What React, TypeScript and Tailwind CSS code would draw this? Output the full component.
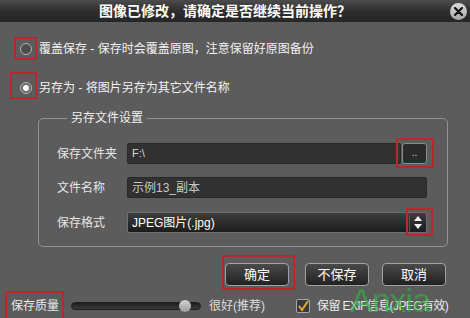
import React from 'react';

const red = 'pointer-events-none absolute border-2 border-[#b8282c]';

function Radio({ checked }: { checked?: boolean }) {
  return (
    <span
      className={
        'flex h-[12px] w-[12px] items-center justify-center rounded-full border border-[#b4b4b4] ' +
        (checked ? 'bg-[#6a6a6a]' : 'bg-[#4e4e4e]')
      }
    >
      {checked && <span className="h-[6px] w-[6px] rounded-full bg-white" />}
    </span>
  );
}

function DarkButton({ label }: { label: string }) {
  return (
    <button className="flex h-[23px] w-[64px] items-center justify-center rounded-[4px] border border-[#a2a2a2] bg-linear-to-b from-[#4a4a4a] to-[#222222] text-[13px] leading-none text-white">
      {label}
    </button>
  );
}

export default function App() {
  return (
    <div className="relative h-[318px] w-[470px] overflow-hidden bg-[#5c5c5c] font-['Liberation_Sans','Noto_Sans_CJK_SC',sans-serif] text-[12px] leading-none text-[#f2f2f2]">
      {/* title bar */}
      <div className="relative flex h-[22px] items-center justify-center bg-linear-to-b from-[#4c4c4c] via-[#2e2e2e] to-[#262626] pr-[20px]">
        <span className="text-[14px] font-bold text-white">图像已修改，请确定是否继续当前操作？</span>
        <button className="absolute right-[3px] top-[3px] flex h-[17px] w-[17px] items-center justify-center rounded-full bg-linear-to-b from-[#dcdcdc] to-[#a6a6a6]">
          <svg width="9" height="9" viewBox="0 0 9 9">
            <path d="M1 1 L8 8 M8 1 L1 8" stroke="#111" strokeWidth="2.2" strokeLinecap="round" />
          </svg>
        </button>
      </div>

      {/* options */}
      <div className="mt-[15px] flex h-[24px] items-center gap-[7px] pl-[20px]">
        <span className="relative">
          <Radio />
          <span className={red + ' left-[-6px] top-[-6px] h-[23px] w-[23px]'} />
        </span>
        <span>覆盖保存 - 保存时会覆盖原图，注意保留好原图备份</span>
      </div>
      <div className="mt-[15px] flex h-[24px] items-center gap-[7px] pl-[20px]">
        <span className="relative">
          <Radio checked />
          <span className={red + ' left-[-10px] top-[-10px] h-[27px] w-[27px]'} />
        </span>
        <span>另存为 - 将图片另存为其它文件名称</span>
      </div>

      {/* group */}
      <fieldset className="ml-[38px] mt-[12px] w-[410px] rounded-[5px] border border-[#929292] pb-[13px] pl-[18px] pr-[20px] pt-[19px]">
        <legend className="ml-[10px] px-[4px] text-[12px] leading-[12px] text-[#f0f0f0]">另存文件设置</legend>

        <div className="flex h-[21px] items-center">
          <span className="w-[70px] shrink-0 text-[#e6e6e6]">保存文件夹</span>
          <div className="flex h-full flex-1 items-center rounded-[2px] border border-[#282828] bg-[#313131] pl-[4px] text-[11px] text-[#d8d8d8]">
            F:\
          </div>
          <button className="relative ml-[1px] flex h-[21px] w-[25px] items-center justify-center rounded-[3px] border border-[#8c8c8c] bg-[#2a2a2a] pb-[2px] text-[10px] text-[#cfcfcf]">
            ..
            <span className={red + ' left-[-7px] top-[-6px] h-[30px] w-[38px]'} />
          </button>
        </div>

        <div className="mt-[13px] flex h-[21px] items-center">
          <span className="w-[70px] shrink-0 text-[#e6e6e6]">文件名称</span>
          <div className="flex h-full flex-1 items-center rounded-[2px] border border-[#282828] bg-[#313131] pl-[4px] text-[#c8c8c8]">
            示例13_副本
          </div>
        </div>

        <div className="mt-[14px] flex h-[21px] items-center">
          <span className="w-[70px] shrink-0 text-[#e6e6e6]">保存格式</span>
          <div className="flex h-full flex-1 items-center rounded-[2px] border border-[#6e6e6e] bg-linear-to-b from-[#3e3e3e] to-[#1c1c1c] pl-[4px] text-white">
            <span className="flex-1">JPEG图片(.jpg)</span>
            <span className="relative flex h-full w-[17px] items-center justify-center border-l border-[#555]">
              <svg width="10" height="15" viewBox="0 0 10 15">
                <path d="M5 1 L9 6 L1 6 Z" fill="#f4f4f4" />
                <path d="M1 9 L9 9 L5 14 Z" fill="#f4f4f4" />
              </svg>
              <span className={red + ' left-[-4px] top-[-5px] h-[28px] w-[27px]'} />
            </span>
          </div>
        </div>
      </fieldset>

      {/* buttons */}
      <div className="mt-[16px] flex justify-end pr-[24px]">
        <div className="relative">
          <DarkButton label="确定" />
          <span className={red + ' left-[-3px] top-[-8px] h-[35px] w-[73px]'} />
        </div>
        <div className="ml-[16px]">
          <DarkButton label="不保存" />
        </div>
        <div className="ml-[13px]">
          <DarkButton label="取消" />
        </div>
      </div>

      {/* bottom row */}
      <div className="mt-[10px] flex h-[20px] items-center pl-[11px]">
        <span className="relative text-[12px] text-[#e8e8e8]">
          保存质量
          <span className={red + ' left-[-6px] top-[-9px] h-[32px] w-[59px]'} />
        </span>
        <div className="relative ml-[12px] h-[8px] w-[130px] rounded-full border border-[#1e1e1e] bg-linear-to-b from-[#1e1e1e] to-[#3a3a3a]">
          <span className="absolute left-[107px] top-[-3px] h-[12px] w-[12px] rounded-full bg-linear-to-b from-[#d4d4d4] to-[#9a9a9a]" />
        </div>
        <span className="ml-[8px] w-[87px] text-[12px] text-[#dedede]">很好(推荐)</span>
        <span className="flex h-[14px] w-[14px] items-center justify-center rounded-[2px] border border-[#a8a8a8] bg-[#3a3a3a]">
          <svg width="12" height="12" viewBox="0 0 12 12">
            <path d="M2 6 L5 10 L11 1" fill="none" stroke="#e8a838" strokeWidth="2" />
          </svg>
        </span>
        <span className="ml-[7px] text-[12px] tracking-[-0.6px] text-[#ececec]">保留 EXIF信息(JPEG有效)</span>
      </div>

      {/* watermark */}
      <span className="pointer-events-none absolute left-[350px] top-[286px] text-[34px] leading-[28px] tracking-[-1px] text-[#34b444] opacity-60">
        Anxia
      </span>
    </div>
  );
}
